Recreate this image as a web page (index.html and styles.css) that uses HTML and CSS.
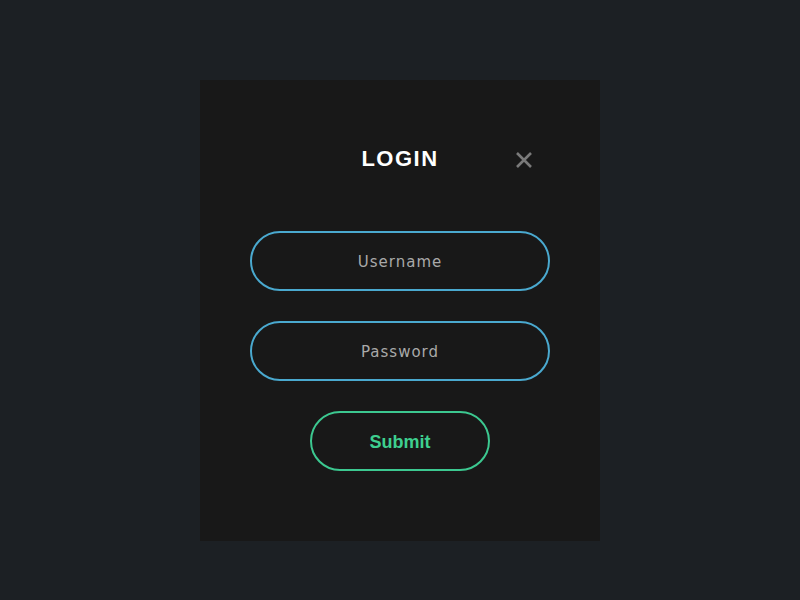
FILE: index.html
```html
<!DOCTYPE html>
<html>
<head>
<meta charset="utf-8">
<link rel="stylesheet" href="styles.css">
</head>
<body>
<div class="page">
  <div class="card">
    <div class="header">
      <h1 class="title">LOGIN</h1>
      <button class="close" aria-label="Close">
        <svg width="18" height="18" viewBox="0 0 18 18"><path d="M2 2 L16 16 M16 2 L2 16" stroke="#7a7a7a" stroke-width="2.6" fill="none"/></svg>
      </button>
    </div>
    <form class="form">
      <input class="field" type="text" placeholder="Username">
      <input class="field" type="password" placeholder="Password">
      <button class="submit" type="button">Submit</button>
    </form>
  </div>
</div>
</body>
</html>
```
FILE: styles.css
```css
html, body {
  margin: 0;
  padding: 0;
  background: #1c2024;
  width: 800px;
  height: 600px;
  overflow: hidden;
}
.page {
  display: flex;
  justify-content: center;
  padding-top: 80px;
}
.card {
  width: 400px;
  height: 461px;
  background: #181818;
  box-sizing: border-box;
  padding: 0 50px;
  display: flex;
  flex-direction: column;
}
.header {
  position: relative;
  height: 80px;
  margin-top: 40px;
  display: flex;
  justify-content: center;
  align-items: flex-start;
}
.title {
  margin: 27px 0 0;
  font-family: "Liberation Sans", Arial, sans-serif;
  font-weight: bold;
  font-size: 22px;
  letter-spacing: 1.5px;
  color: #ffffff;
  line-height: 24px;
}
.close {
  position: absolute;
  right: 17px;
  top: 31px;
  width: 18px;
  height: 18px;
  padding: 0;
  border: none;
  background: none;
  display: flex;
}
.form {
  margin-top: 31px;
  display: flex;
  flex-direction: column;
  align-items: center;
  gap: 30px;
}
.field {
  width: 300px;
  height: 60px;
  box-sizing: border-box;
  border: 2px solid #4aa9cf;
  border-radius: 30px;
  background: transparent;
  text-align: center;
  font-family: "DejaVu Sans", sans-serif;
  font-size: 15px;
  letter-spacing: 1px;
  color: #b0b0b0;
  outline: none;
  padding-top: 2px;
}
.field::placeholder {
  color: #a9a9a9;
}
.submit {
  width: 180px;
  height: 60px;
  box-sizing: border-box;
  border: 2px solid #3cc890;
  border-radius: 30px;
  background: transparent;
  font-family: "Liberation Sans", Arial, sans-serif;
  font-weight: bold;
  font-size: 18px;
  color: #3ecf8f;
  padding: 2px 0 0;
}
```
